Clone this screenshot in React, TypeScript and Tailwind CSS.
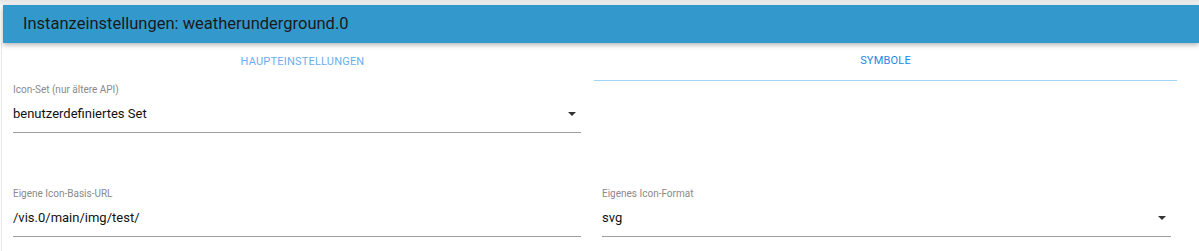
import React from "react";

function Arrow() {
  return (
    <svg width="8" height="4" viewBox="0 0 8 4" className="block">
      <path d="M0 0 L8 0 L4 4 Z" fill="#333" />
    </svg>
  );
}

function Field({
  label,
  value,
  select,
}: {
  label: string;
  value: string;
  select?: boolean;
}) {
  return (
    <div className="flex flex-col">
      <div className="text-[10px] leading-[12px] text-[#8a8a8a] h-[12px]">{label}</div>
      <div className="flex items-center justify-between h-[30px] mt-[7px] border-b border-[#9e9e9e] pb-[8px]">
        <span className="text-[13px] text-[#111]">{value}</span>
        {select && (
          <span className="mr-[5px]">
            <Arrow />
          </span>
        )}
      </div>
    </div>
  );
}

export default function App() {
  return (
    <div
      className="w-[1199px] h-[251px] bg-white overflow-hidden"
      style={{ fontFamily: "Roboto, 'Open Sans', Arial, sans-serif" }}
    >
      <div className="h-[5px] bg-gradient-to-b from-[#e4e4e4] to-[#f6f6f6]" />
      <div className="pl-[3px]">
        <div className="h-[38px] bg-[#3399cc] flex items-center pl-[20px] shadow-[0_2px_5px_rgba(0,0,0,0.3)] relative z-10">
          <span className="text-[16.5px] text-[#1a1a1a]">
            Instanzeinstellungen: weatherunderground.0
          </span>
        </div>
      </div>
      <div className="border-l border-[#e6e6e6] ml-[1px] h-[208px]">
        <div className="flex pl-[9px] w-[1175px]">
          <div className="flex-1 h-[38px] flex items-center justify-center text-[11px] tracking-[0.2px] text-[#6aaef0]">
            HAUPTEINSTELLUNGEN
          </div>
          <div className="flex-1 h-[38px] flex items-center justify-center text-[11px] tracking-[0.2px] text-[#1e88e5] border-b border-[#9fd6f5]">
            SYMBOLE
          </div>
        </div>
        <div className="pl-[11px] pt-[3px] w-[1170px]">
          <div className="w-[568px]">
            <Field label="Icon-Set (nur ältere API)" value="benutzerdefiniertes Set" select />
          </div>
          <div className="grid grid-cols-[568px_569px] gap-x-[21px] mt-[55px]">
            <Field label="Eigene Icon-Basis-URL" value="/vis.0/main/img/test/" />
            <Field label="Eigenes Icon-Format" value="svg" select />
          </div>
        </div>
      </div>
    </div>
  );
}
